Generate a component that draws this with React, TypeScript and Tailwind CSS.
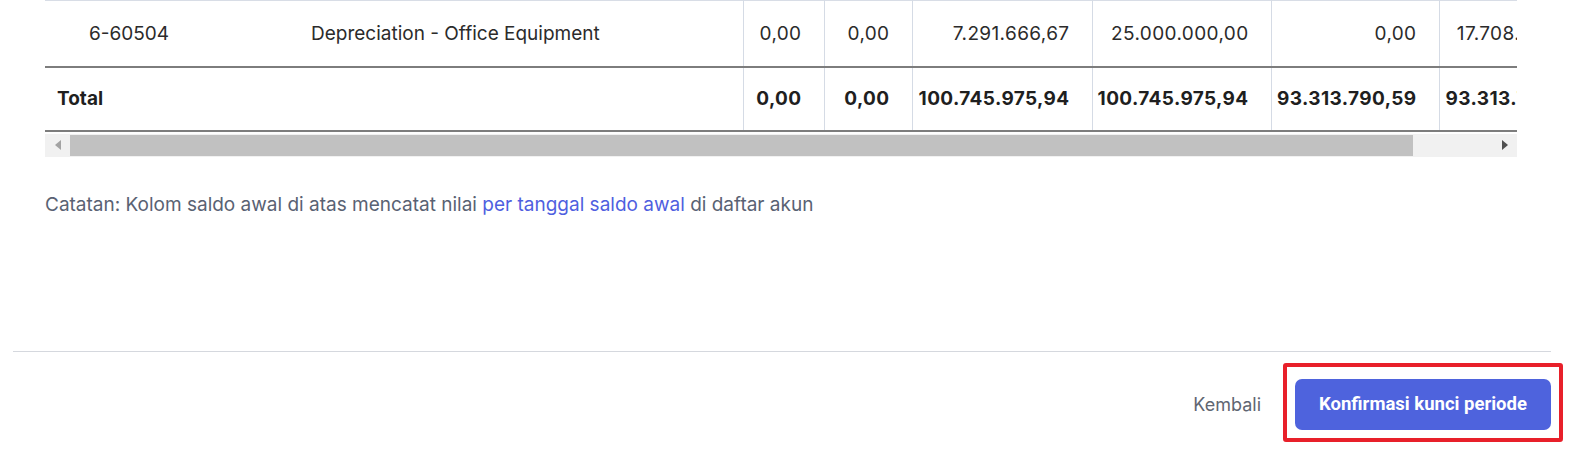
import React from "react";

type Row = { code: string; name: string; values: string[] };

const ROW: Row = {
  code: "6-60504",
  name: "Depreciation - Office Equipment",
  values: ["0,00", "0,00", "7.291.666,67", "25.000.000,00", "0,00", "17.708.333,33"],
};

const TOTALS = ["0,00", "0,00", "100.745.975,94", "100.745.975,94", "93.313.790,59", "93.313.790,59"];

// lebar kolom, urut sesuai tabel
const COLS = [220, 478, 81, 88, 180, 179, 168, 168];

function ScrollBar() {
  return (
    <div className="mt-[2px] flex h-[23px] w-[1472px] bg-[#f1f1f1]">
      <div className="flex w-[25px] items-center justify-center">
        <svg width="6" height="10" viewBox="0 0 6 10">
          <path d="M6 0 L0 5 L6 10 Z" fill="#a3a3a3" />
        </svg>
      </div>
      <div className="flex flex-1 py-[1px]">
        <div className="h-full w-[1343px] bg-[#c1c1c1]" />
      </div>
      <div className="flex w-[25px] items-center justify-center">
        <svg width="6" height="10" viewBox="0 0 6 10">
          <path d="M0 0 L6 5 L0 10 Z" fill="#505050" />
        </svg>
      </div>
    </div>
  );
}

export default function App() {
  return (
    <div className="flex h-[456px] w-full flex-col bg-white font-['Inter',sans-serif]">
      <div className="flex-1 pl-[45px]">
        <div className="w-[1472px] overflow-hidden">
          <table className="w-[1562px] table-fixed border-collapse text-[19px]">
            <colgroup>
              {COLS.map((w, i) => (
                <col key={i} style={{ width: w }} />
              ))}
            </colgroup>
            <tbody>
              <tr className="h-[66px] border-t border-b-2 border-t-[#d8dde6] border-b-[#7d7d7d] text-[#2b2b2b]">
                <td className="pl-[44px] pt-[2px]">{ROW.code}</td>
                <td className="pl-[46px] pt-[2px]">{ROW.name}</td>
                {ROW.values.map((v, i) => (
                  <td key={i} className="border-l border-[#d5dbe5] pr-[22px] pt-[2px] text-right tracking-[0.02em] whitespace-nowrap">
                    {v}
                  </td>
                ))}
              </tr>
              <tr className="h-[64px] border-b-2 border-b-[#7d7d7d] font-bold text-[#1f1f1f]">
                <td className="pl-3 pt-[2px]" colSpan={2}>
                  Total
                </td>
                {TOTALS.map((v, i) => (
                  <td key={i} className="border-l border-[#d5dbe5] pr-[22px] pt-[2px] text-right tracking-[0.02em] whitespace-nowrap">
                    {v}
                  </td>
                ))}
              </tr>
            </tbody>
          </table>
        </div>
        <ScrollBar />
        <p className="mt-[34px] text-[19px] text-[#596273]">
          Catatan: Kolom saldo awal di atas mencatat nilai{" "}
          <span className="text-[#4f5fe0]">per tanggal saldo awal</span> di daftar akun
        </p>
      </div>

      <div className="ml-[13px] mr-[23px] flex h-[105px] items-start justify-end border-t border-[#d5d8de] pt-[27px]">
        <button className="mr-[34px] flex h-[51px] items-center text-[18px] text-[#5f6672]">
          Kembali
        </button>
        <div className="relative">
          <span className="pointer-events-none absolute -top-[16px] -bottom-[12px] -left-[12px] -right-[12px] rounded-[3px] border-4 border-[#e8202a]" />
          <button className="h-[51px] w-[256px] rounded-[7px] bg-[#4e63dd] font-['Roboto',sans-serif] text-[18.5px] font-bold text-white">
            Konfirmasi kunci periode
          </button>
        </div>
      </div>
    </div>
  );
}
